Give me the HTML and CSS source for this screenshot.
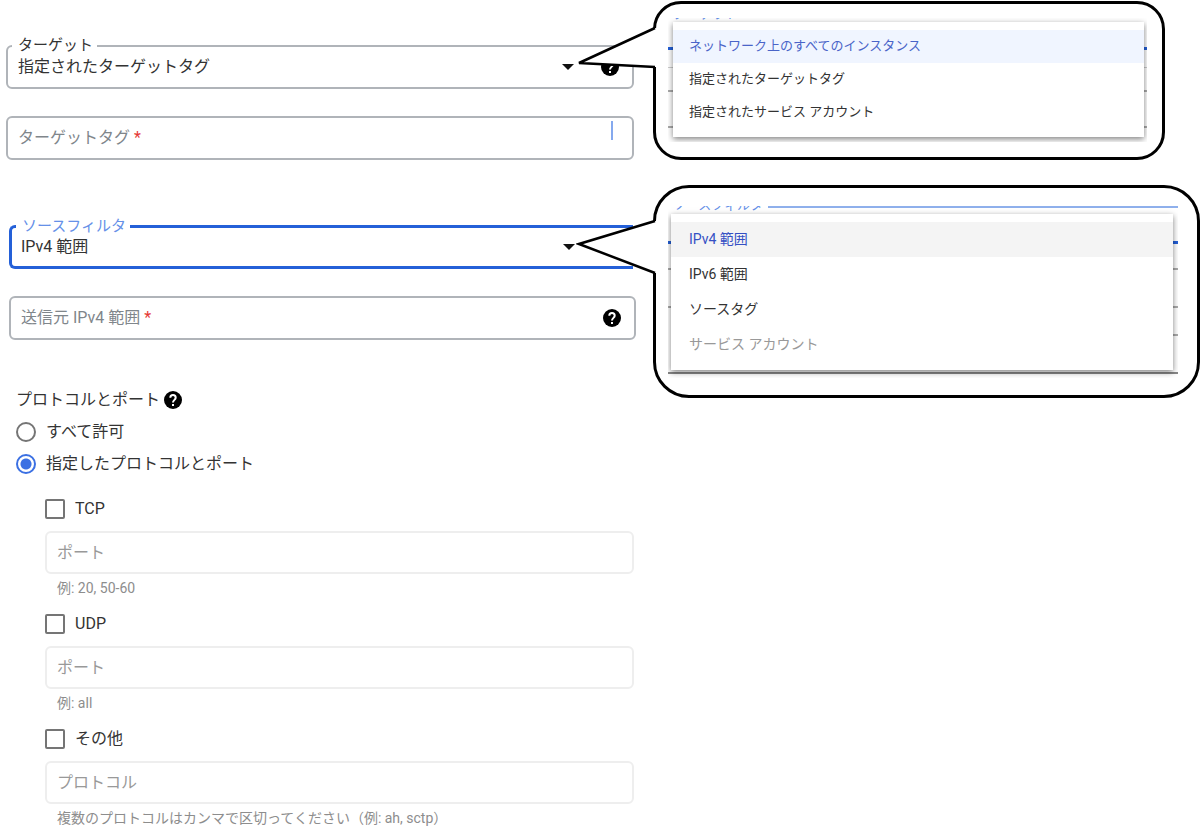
FILE: index.html
```html
<!DOCTYPE html>
<html lang="ja">

<head>
    <meta charset="UTF-8">
    <meta name="viewport" content="width=device-width, initial-scale=1.0">
    <title>ファイアウォール ルール</title>
    <link rel="stylesheet" href="styles.css">
</head>

<body>
    <svg class="symbols" aria-hidden="true">
        <symbol id="help" viewBox="0 0 20 20">
            <circle cx="10" cy="10" r="10"/>
            <path d="M7 7.500c0-1.650 1.350-3 3-3s3 1.350 3 3c0 2.300-3 2.500-3 5.300M10 14.500v2.200" fill="none" stroke="#fff" stroke-width="2.200"/>
        </symbol>
    </svg>
    <div id="container">
        <form class="rule-form">
            <div class="target">
                <div class="field">
                    <label class="notch" for="target">ターゲット</label>
                    <select id="target">
                        <option>ネットワーク上のすべてのインスタンス</option>
                        <option selected>指定されたターゲットタグ</option>
                        <option>指定されたサービス アカウント</option>
                    </select>
                    <span class="arrow"></span>
                    <svg class="help"><use href="#help"/></svg>
                </div>
                <div class="field">
                    <label class="inner" for="tag">ターゲットタグ<b>*</b></label>
                    <input id="tag" type="text" required>
                    <span class="caret"></span>
                </div>
            </div>

            <div class="source">
                <div class="field focus">
                    <label class="notch" for="filter">ソースフィルタ</label>
                    <select id="filter">
                        <option>IPv4 範囲</option>
                        <option>IPv6 範囲</option>
                        <option>ソースタグ</option>
                        <option disabled>サービス アカウント</option>
                    </select>
                    <span class="arrow"></span>
                </div>
                <div class="field">
                    <label class="inner" for="range">送信元 IPv4 範囲<b>*</b></label>
                    <input id="range" type="text" required>
                    <svg class="help"><use href="#help"/></svg>
                </div>
            </div>

            <div class="protocol">
                <h2>プロトコルとポート <svg class="help"><use href="#help"/></svg></h2>
                <label class="radio"><input type="radio" name="protocol">すべて許可</label>
                <label class="radio"><input type="radio" name="protocol" checked>指定したプロトコルとポート</label>

                <div class="ports">
                    <div class="port">
                        <label class="check"><input type="checkbox">TCP</label>
                        <input class="text" type="text" placeholder="ポート" aria-label="TCP ポート" disabled>
                        <p>例: 20, 50-60</p>
                    </div>
                    <div class="port">
                        <label class="check"><input type="checkbox">UDP</label>
                        <input class="text" type="text" placeholder="ポート" aria-label="UDP ポート" disabled>
                        <p>例: all</p>
                    </div>
                    <div class="port">
                        <label class="check"><input type="checkbox">その他</label>
                        <input class="text" type="text" placeholder="プロトコル" aria-label="その他のプロトコル" disabled>
                        <p>複数のプロトコルはカンマで区切ってください（例: ah, sctp）</p>
                    </div>
                </div>
            </div>
        </form>

        <div class="callouts">
            <div class="callout callout-target">
                <svg class="tail" width="80" height="100" viewBox="0 0 80 100">
                    <path d="M78 28L3 63L78 67H80V28z" fill="#fff"/>
                    <path d="M79 28L3 63L79 67" fill="none" stroke="#000" stroke-width="2.500"/>
                </svg>
                <div class="clip">
                    <span class="behind">ターゲット</span>
                    <ul class="menu">
                        <li><button class="selected" type="button">ネットワーク上のすべてのインスタンス</button></li>
                        <li><button type="button">指定されたターゲットタグ</button></li>
                        <li><button type="button">指定されたサービス アカウント</button></li>
                    </ul>
                </div>
            </div>
            <div class="callout callout-source">
                <svg class="tail" width="80" height="100" viewBox="0 0 80 100">
                    <path d="M78 37L3 60L78 89H80V37z" fill="#fff"/>
                    <path d="M79 37L3 60L79 89" fill="none" stroke="#000" stroke-width="2.500"/>
                </svg>
                <div class="clip">
                    <span class="behind">ソースフィルタ</span>
                    <ul class="menu">
                        <li><button class="selected" type="button">IPv4 範囲</button></li>
                        <li><button type="button">IPv6 範囲</button></li>
                        <li><button type="button">ソースタグ</button></li>
                        <li><button type="button" disabled>サービス アカウント</button></li>
                    </ul>
                </div>
            </div>
        </div>
    </div>
</body>

</html>
```

FILE: styles.css
```css
* {
    margin: 0;
    padding: 0;
    box-sizing: border-box;
}

body {
    background: #fff;
    color: #333;
    font-family: Roboto, "Noto Sans CJK JP", sans-serif;
    font-size: 16px;
    line-height: 24px;
}

input,
select,
button {
    font: inherit;
    color: inherit;
}

ul {
    list-style: none;
}

.symbols {
    display: none;
}

#container {
    display: flex;
    gap: 17px;
}

.rule-form {
    flex: 0 0 53%;
    min-width: 0;
    padding: 45px 0 3px 6px;
}

/* 入力欄 */
.target,
.source {
    display: flex;
    flex-direction: column;
    gap: 27px;
}

.target {
    margin-right: 2px;
}

.source {
    margin: 65px 0 0 3px;
}

.field {
    position: relative;
    height: 44px;
    border: 2px solid #b0b4b9;
    border-radius: 6px;
    display: flex;
    align-items: center;
}

.field select,
.field input {
    width: 100%;
    height: 100%;
    padding: 0 10px;
    border: 0;
    outline: 0;
    background: transparent;
    appearance: none;
}

/* 枠線の上に重なるラベル */
.notch {
    position: absolute;
    left: 4px;
    top: -12px;
    padding: 0 4px 0 6px;
    background: #fff;
    font-size: 15px;
    line-height: 20px;
}

.inner {
    position: absolute;
    left: 10px;
    color: #80868b;
}

.inner b {
    margin-left: 4px;
    color: #e53935;
    font-weight: 400;
}

.focus {
    border: 3px solid #2460d8;
    border-right: 0;
    border-radius: 6px 0 0 6px;
    margin-right: 3px;
}

.focus select {
    padding-left: 9px;
}

.focus .notch {
    color: #6590e8;
}

.arrow {
    position: absolute;
    right: 58px;
    border: 6px solid transparent;
    border-top-color: #111;
    border-bottom: 0;
}

.help {
    width: 18px;
    height: 18px;
}

.field .help {
    position: absolute;
    right: 13px;
}

.caret {
    position: absolute;
    right: 19px;
    top: 3px;
    width: 2px;
    height: 19px;
    background: #85a9ee;
}

/* プロトコル */
.protocol {
    margin-top: 48px;
    padding: 0 2px 0 10px;
}

.protocol h2 {
    display: flex;
    align-items: center;
    gap: 4px;
    margin-bottom: 4px;
    font-size: 16px;
    font-weight: 400;
}

.radio,
.check {
    display: flex;
    align-items: center;
    gap: 10px;
}

.radio {
    height: 32px;
}

.radio input {
    width: 20px;
    height: 20px;
    border: 2px solid #757575;
    border-radius: 50%;
    appearance: none;
}

.radio input:checked {
    border-color: #3b70e3;
    background: radial-gradient(circle, #3b70e3 5px, #fff 6px);
}

.ports {
    display: flex;
    flex-direction: column;
    gap: 14px;
    margin: 17px 0 0 29px;
}

.check input {
    width: 20px;
    height: 20px;
    border: 2px solid #757575;
    border-radius: 2px;
    appearance: none;
}

.port .text {
    display: block;
    width: 100%;
    height: 43px;
    margin: 10px 0 4px;
    padding: 0 10px;
    border: 2px solid #eee;
    border-radius: 6px;
    background: #fff;
}

.port .text::placeholder {
    color: #999;
}

.port p {
    padding-left: 12px;
    color: #8d8d8d;
    font-size: 14px;
    line-height: 20px;
}

/* 吹き出し */
.callouts {
    flex: 1;
    min-width: 0;
    padding-top: 1px;
}

.callout {
    position: relative;
    border: 3px solid #000;
    background: #fff;
}

.tail {
    position: absolute;
    left: -80px;
    top: -4px;
}

.callout-target {
    margin: 0 35px 25px 0;
    padding: 14px 15px 15px 12px;
    border-radius: 28px;
}

.callout-source {
    padding: 18px 19px 17px 12px;
    border-radius: 36px;
}

.clip {
    position: relative;
    overflow: hidden;
}

/* メニューの後ろに見える欄の線 */
.callout-target .clip {
    padding: 4px 3px 5px 5px;
    background:
        linear-gradient(#2460d8, #2460d8) 0 29px / 100% 3px no-repeat,
        linear-gradient(#ccc, #ccc) 0 49px / 100% 1px no-repeat,
        linear-gradient(#aaa, #aaa) 0 72px / 100% 2px no-repeat,
        linear-gradient(#aaa, #aaa) 0 108px / 100% 2px no-repeat;
}

.callout-source .clip {
    padding: 8px 5px 8px 3px;
    background:
        linear-gradient(#8fb0ec, #8fb0ec) 100px 0 / 100% 2px no-repeat,
        linear-gradient(#2460d8, #2460d8) 0 35px / 100% 3px no-repeat,
        linear-gradient(#aaa, #aaa) 0 62px / 100% 2px no-repeat,
        linear-gradient(#aaa, #aaa) 0 100px / 100% 2px no-repeat,
        linear-gradient(#aaa, #aaa) 100% 128px / 50% 2px no-repeat,
        linear-gradient(#888, #888) 0 166px / 100% 2px no-repeat;
}

.behind {
    position: absolute;
    left: 5px;
    top: -12px;
    color: #6590e8;
    font-size: 13px;
    line-height: 16px;
}

.callout-source .behind {
    top: -9px;
}

.menu {
    position: relative;
    padding: 8px 0;
    background: #fff;
    box-shadow: 0 2px 6px rgba(0, 0, 0, 0.5);
}

.menu button {
    display: block;
    width: 100%;
    height: 33px;
    padding: 0 16px 2px;
    border: 0;
    background: transparent;
    font-size: 13px;
    text-align: left;
    cursor: pointer;
}

.menu .selected {
    background: #f0f5ff;
    color: #4a64c8;
}

.callout-source button {
    height: 35px;
    padding-left: 18px;
    font-size: 14px;
}

.callout-source .selected {
    background: #f4f4f4;
    color: #3550c4;
}

.menu button:disabled {
    color: #999;
}
```
